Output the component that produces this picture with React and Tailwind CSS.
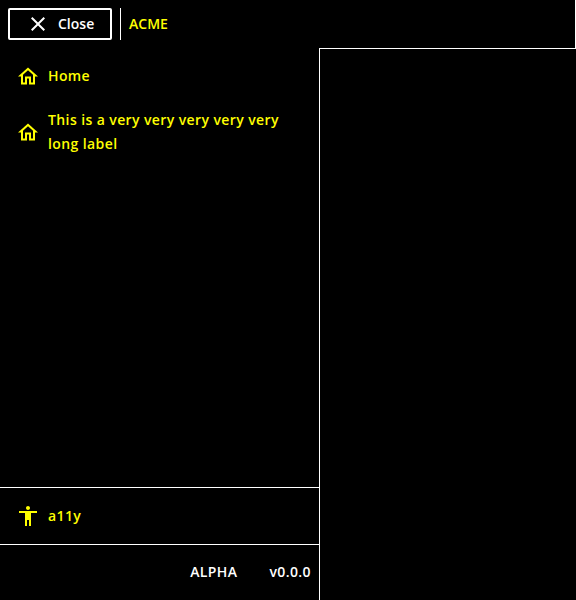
import React from 'react';

const HOME =
  'M12 6.19l5 4.5V18.5h-2v-6H9v6H7v-7.81l5-4.5M12 3.5L2 12.5h3v8h6v-6h2v6h6v-8h3L12 3.5z';
const PERSON =
  'M12 2c1.1 0 2 .9 2 2s-.9 2-2 2-2-.9-2-2 .9-2 2-2zm9 7h-6v13h-2v-6h-2v6H9V9H3V7h18v2z';
const CLOSE =
  'M19 6.41L17.59 5 12 10.59 6.41 5 5 6.41 10.59 12 5 17.59 6.41 19 12 13.41 17.59 19 19 17.59 13.41 12z';

function Icon({ d }) {
  return (
    <svg viewBox="0 0 24 24" className="size-6 shrink-0 fill-current" aria-hidden="true">
      <path d={d} />
    </svg>
  );
}

function NavItem({ icon, label }) {
  return (
    <a href="#" className="flex min-h-14 items-center gap-2 px-4 py-1 text-[#ffff00]">
      <Icon d={icon} />
      <span className="flex-1">{label}</span>
    </a>
  );
}

export default function App() {
  return (
    <div className="flex h-screen flex-col overflow-hidden bg-black font-['Open_Sans',sans-serif] text-sm leading-6 font-semibold tracking-[0.4px] text-white">
      <header className="flex h-12 shrink-0 items-center gap-2 border-r border-white px-2 tracking-normal">
        <button className="flex h-8 w-26 items-center gap-2 rounded-xs border-2 border-white pl-4">
          <Icon d={CLOSE} />
          Close
        </button>
        <a href="#" className="flex h-8 items-center border-l border-white pl-2 text-[#ffff00]">
          ACME
        </a>
      </header>
      <div className="flex min-h-0 flex-1">
        <aside className="flex w-80 flex-col border-r border-white">
          <nav className="flex-1">
            <NavItem icon={HOME} label="Home" />
            <NavItem icon={HOME} label="This is a very very very very very long label" />
          </nav>
          <div className="border-t border-white">
            <NavItem icon={PERSON} label="a11y" />
          </div>
          <footer className="flex h-14 items-center justify-end gap-8 border-t border-white pr-2 pb-px">
            <span>ALPHA</span>
            <span>v0.0.0</span>
          </footer>
        </aside>
        <main className="flex-1 border-t border-white" />
      </div>
    </div>
  );
}
